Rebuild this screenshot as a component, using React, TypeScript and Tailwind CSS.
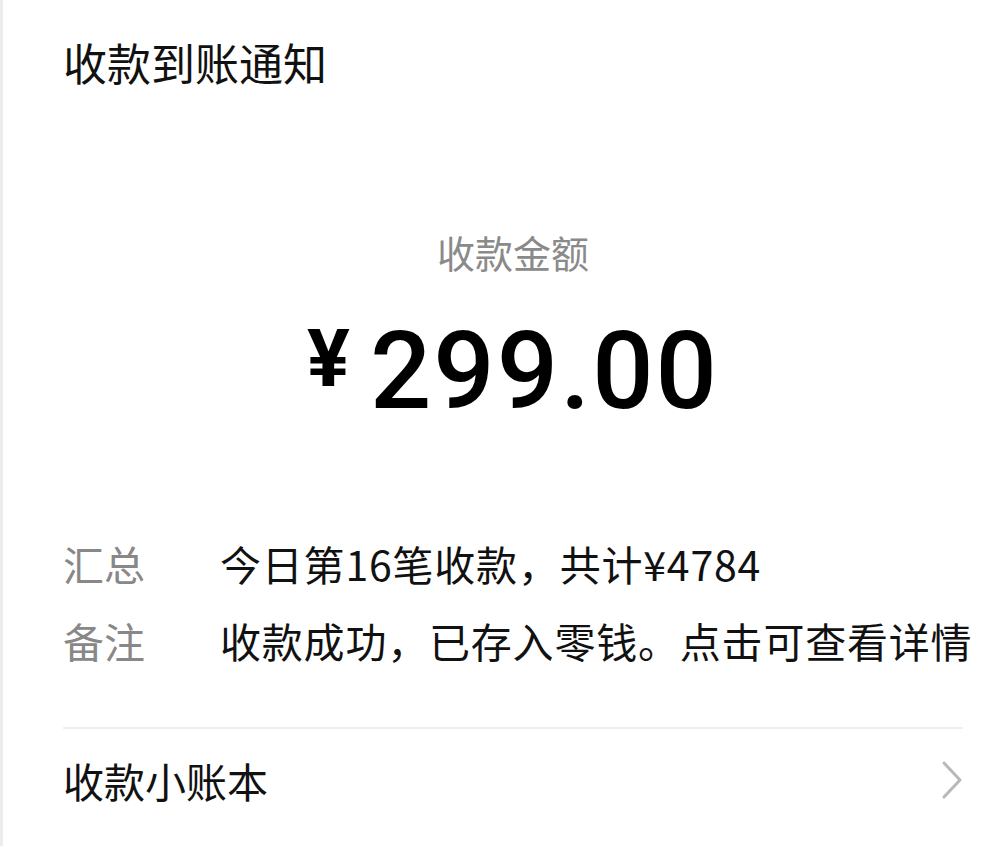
import React from 'react';

const cjk = { fontFamily: '"Noto Sans CJK SC", "Noto Sans", sans-serif' };
const num = { fontFamily: 'Roboto, "Noto Sans", sans-serif' };

const rows = [
  { label: '汇总', value: '今日第16笔收款，共计¥4784' },
  { label: '备注', value: '收款成功，已存入零钱。点击可查看详情' },
];

export default function App() {
  return (
    <div className="w-[1001px] h-[846px] bg-white border-l-[3px] border-[#ececec] overflow-hidden" style={cjk}>
      <div className="pl-[60px] pr-[38px]">
        <h1 className="pt-[34px] text-[44px] leading-[56px] text-[#111] font-normal">
          收款到账通知
        </h1>

        <div className="flex flex-col items-center mt-[137px]">
          <div className="text-[38px] leading-[50px] text-[#8a8a8a]">收款金额</div>
          <div className="flex items-start mt-[44px] text-black">
            <span className="text-[80px] leading-[80px] font-bold mt-[-2px] mr-[20px]" style={num}>
              ¥
            </span>
            <span className="text-[108px] leading-[100px] font-medium tracking-[2px]" style={num}>
              299.00
            </span>
          </div>
        </div>

        <div className="mt-[117px] flex flex-col gap-[27px]">
          {rows.map((r) => (
            <div key={r.label} className="flex items-center text-[41px] leading-[50px]">
              <span className="w-[157px] shrink-0 text-[#888]">{r.label}</span>
              <span className="text-[#111] whitespace-nowrap tracking-[0.8px]">{r.value}</span>
            </div>
          ))}
        </div>

        <div className="mt-[62px] border-t-2 border-[#efefef]" />

        <div className="flex items-center justify-between pt-[25px]">
          <span className="text-[41px] leading-[52px] text-[#111]">收款小账本</span>
          <svg width="22" height="38" viewBox="0 0 22 38" fill="none">
            <path d="M3 2 L19 19 L3 36" stroke="#b8b8b8" strokeWidth="3" strokeLinejoin="round" strokeLinecap="round" />
          </svg>
        </div>
      </div>
    </div>
  );
}
